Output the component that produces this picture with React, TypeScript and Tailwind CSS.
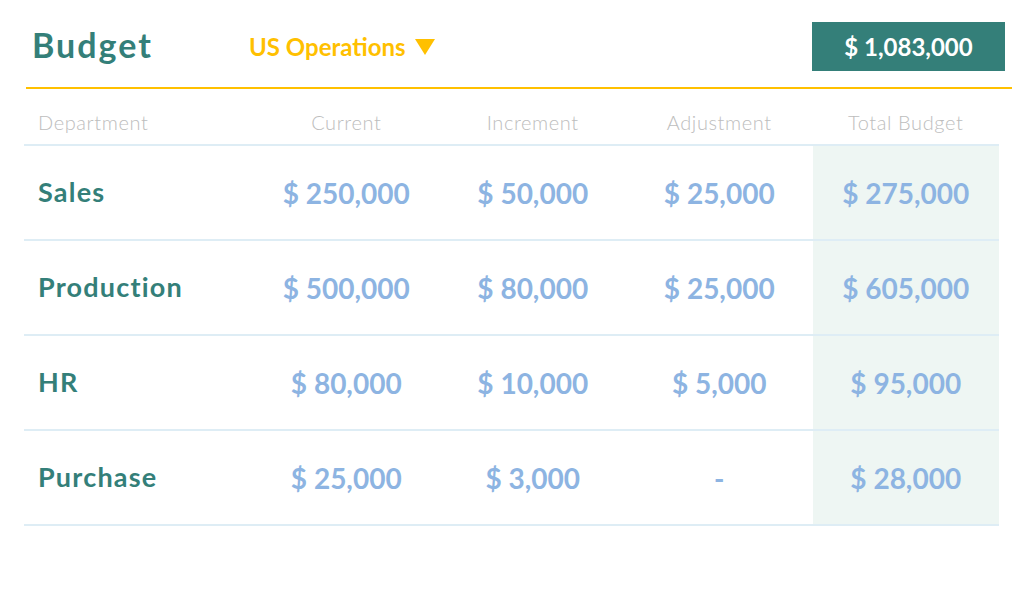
import React from "react";

const rows = [
  { dept: "Sales", cur: "$ 250,000", inc: "$ 50,000", adj: "$ 25,000", tot: "$ 275,000" },
  { dept: "Production", cur: "$ 500,000", inc: "$ 80,000", adj: "$ 25,000", tot: "$ 605,000" },
  { dept: "HR", cur: "$ 80,000", inc: "$ 10,000", adj: "$ 5,000", tot: "$ 95,000" },
  { dept: "Purchase", cur: "$ 25,000", inc: "$ 3,000", adj: "-", tot: "$ 28,000" },
];

export default function App() {
  return (
    <div className="w-[1024px] h-[594px] bg-white font-['Lato',sans-serif] overflow-hidden">
      <div className="flex items-center pt-[22px] pl-[32px] pr-[19px] h-[71px]">
        <div className="w-[122px] text-[34px] font-bold text-[#347f79] tracking-[2px] leading-none mt-[-3px]">Budget</div>
        <div className="ml-[95px] flex items-center text-[#ffc000] text-[24px] font-bold leading-none">
          <span>US Operations</span>
          <svg width="20" height="16" viewBox="0 0 20 16" className="ml-[9px]">
            <polygon points="0,0 20,0 10,16" fill="#ffc000" />
          </svg>
        </div>
        <div className="ml-auto w-[193px] h-[49px] bg-[#347f79] flex items-center justify-center text-white text-[24px] font-bold">
          $ 1,083,000
        </div>
      </div>
      <div className="ml-[26px] mt-[16px] w-[986px] h-[2px] bg-[#ffc000]" />
      <div className="ml-[24px] w-[975px]">
        <div className="grid grid-cols-[229px_1fr_1fr_1fr_1fr] h-[57px] pt-[11px] border-b-2 border-[#deedf5] items-center text-[20px] font-light tracking-[0.6px] text-[#bdbdbd]">
          <div className="pl-[14px]">Department</div>
          <div className="text-center">Current</div>
          <div className="text-center">Increment</div>
          <div className="text-center">Adjustment</div>
          <div className="text-center">Total Budget</div>
        </div>
        {rows.map((r) => (
          <div
            key={r.dept}
            className="grid grid-cols-[229px_1fr_1fr_1fr_1fr] h-[95px] border-b-2 border-[#deedf5] items-stretch text-[28px] font-bold"
          >
            <div className="pl-[14px] flex items-center text-[#347f79] text-[27px] tracking-[1.2px]">{r.dept}</div>
            <div className="flex items-center justify-center text-[#8db4e2]">{r.cur}</div>
            <div className="flex items-center justify-center text-[#8db4e2]">{r.inc}</div>
            <div className="flex items-center justify-center text-[#8db4e2]">{r.adj}</div>
            <div className="flex items-center justify-center text-[#8db4e2] bg-[#eef6f3]">{r.tot}</div>
          </div>
        ))}
      </div>
    </div>
  );
}
